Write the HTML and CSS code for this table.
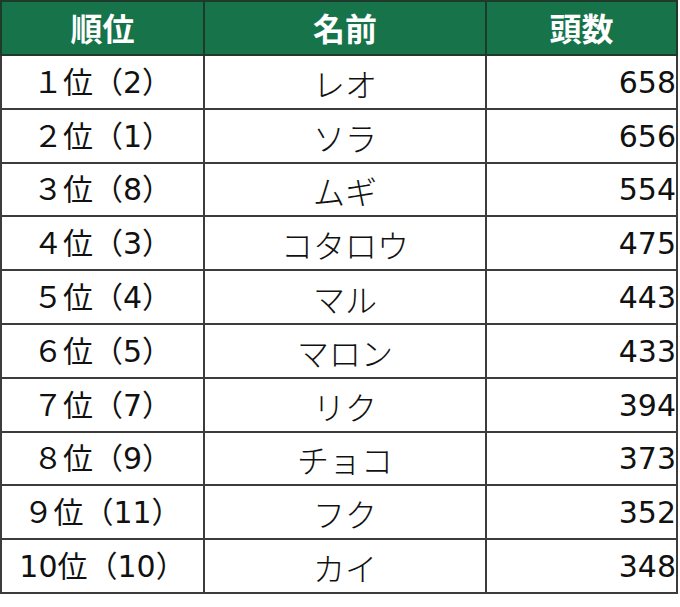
FILE: index.html
```html
<!DOCTYPE html>
<html lang="ja">
<head>
<meta charset="utf-8">
<link rel="stylesheet" href="styles.css">
</head>
<body>
<table class="rank">
  <colgroup>
    <col class="c-rank"><col class="c-name"><col class="c-count">
  </colgroup>
  <thead>
    <tr><th>順位</th><th>名前</th><th>頭数</th></tr>
  </thead>
  <tbody>
    <tr><td class="rk">１位（2）</td><td class="nm">レオ</td><td class="num">658</td></tr>
    <tr><td class="rk">２位（1）</td><td class="nm">ソラ</td><td class="num">656</td></tr>
    <tr><td class="rk">３位（8）</td><td class="nm">ムギ</td><td class="num">554</td></tr>
    <tr><td class="rk">４位（3）</td><td class="nm">コタロウ</td><td class="num">475</td></tr>
    <tr><td class="rk">５位（4）</td><td class="nm">マル</td><td class="num">443</td></tr>
    <tr><td class="rk">６位（5）</td><td class="nm">マロン</td><td class="num">433</td></tr>
    <tr><td class="rk">７位（7）</td><td class="nm">リク</td><td class="num">394</td></tr>
    <tr><td class="rk">８位（9）</td><td class="nm">チョコ</td><td class="num">373</td></tr>
    <tr><td class="rk">９位（11）</td><td class="nm">フク</td><td class="num">352</td></tr>
    <tr><td class="rk">10位（10）</td><td class="nm">カイ</td><td class="num">348</td></tr>
  </tbody>
</table>
</body>
</html>
```
FILE: styles.css
```css
html, body {
  margin: 0;
  padding: 0;
  background: #ffffff;
}
body {
  font-family: "DejaVu Sans", "Noto Sans CJK JP", sans-serif;
  color: #111111;
}
.rank {
  margin: 0;
  border-collapse: collapse;
  table-layout: fixed;
  width: 676px;
  border: 2px solid #3c3c3c;
}
.c-rank { width: 203px; }
.c-name { width: 282px; }
.c-count { width: 191px; }
.rank th,
.rank td {
  border: 2px solid #3c3c3c;
  padding: 0;
  line-height: 1;
}
.rank th {
  height: 50px;
  background: #17734a;
  color: #ffffff;
  font-family: "Noto Sans CJK JP", sans-serif;
  font-weight: 700;
  font-size: 32px;
  text-align: center;
  border-color: #1d3a2a;
  padding-bottom: 2px;
}
.rank td {
  height: 49.8px;
  font-size: 30px;
  padding-top: 2px;
}
.rk {
  text-align: center;
  font-size: 31px;
}
.rank .nm {
  text-align: center;
  font-family: "Noto Sans CJK JP", sans-serif;
  font-weight: 300;
  font-size: 32px;
}
.num {
  text-align: right;
  padding-right: 3px;
}
```
